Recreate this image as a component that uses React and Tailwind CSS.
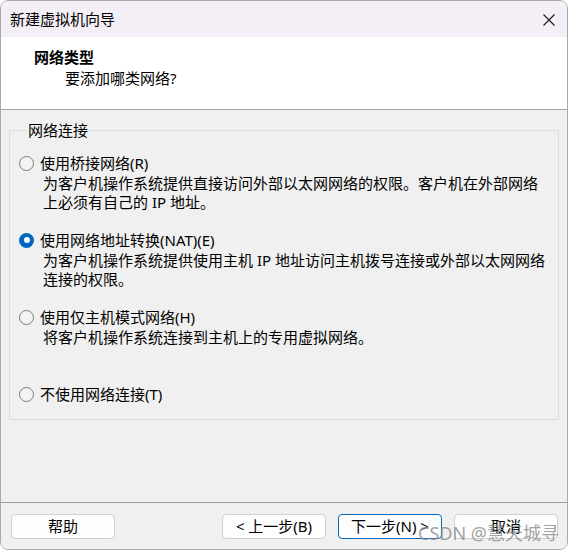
import React from "react";

const font = { fontFamily: '"Noto Sans", "Noto Sans CJK SC", sans-serif' };

function Radio({ checked }) {
  if (checked) {
    return (
      <span className="flex h-[15px] w-[15px] shrink-0 items-center justify-center rounded-full bg-[#0067c0]">
        <span className="h-[6px] w-[6px] rounded-full bg-white" />
      </span>
    );
  }
  return <span className="h-[15px] w-[15px] shrink-0 rounded-full border border-[#7c7c7c] bg-[#f3f3f3]" />;
}

function Option({ checked, label, desc }) {
  return (
    <div className="flex flex-col">
      <div className="flex h-[20px] items-center gap-[6px]">
        <Radio checked={checked} />
        <span className="leading-[20px]">{label}</span>
      </div>
      {desc !== undefined && (
        <div className="mt-[1px] h-[38px] pl-[24px] leading-[19px]">{desc}</div>
      )}
    </div>
  );
}

function Btn({ children, primary }) {
  return (
    <button
      className={
        primary
          ? "flex h-[25px] w-[104px] items-center justify-center rounded-[4px] border border-[#0067c0] bg-[#fdfdfd] text-[15px] leading-none text-black"
          : "flex h-[25px] w-[104px] items-center justify-center rounded-[4px] border border-[#d0d0d0] bg-[#fdfdfd] text-[15px] leading-none text-black"
      }
    >
      {children}
    </button>
  );
}

export default function App() {
  return (
    <div className="h-[551px] w-[570px] bg-white text-[15px] text-black" style={font}>
      <div className="relative flex h-[550px] w-[568px] flex-col overflow-hidden rounded-[8px] border border-[#a9a9a9]">
        {/* title bar */}
        <div className="flex h-[36px] shrink-0 items-center justify-between bg-[#f4eef7] pl-[9px] pr-[12px]">
          <span className="leading-[20px]">新建虚拟机向导</span>
          <svg width="12" height="12" viewBox="0 0 12 12" className="mt-[2px]">
            <path d="M0.5 0.5 L11.5 11.5 M11.5 0.5 L0.5 11.5" stroke="#1a1a1a" strokeWidth="1.1" />
          </svg>
        </div>
        {/* header */}
        <div className="h-[73px] shrink-0 border-b border-[#a0a0a0] bg-white pl-[33px] pt-[10px]">
          <div className="font-bold leading-[20px]">网络类型</div>
          <div className="pl-[31px] leading-[22px]">要添加哪类网络?</div>
        </div>
        {/* body */}
        <div className="flex flex-1 flex-col bg-[#f0f0f0]">
          <div className="px-[8px] pt-[10px]">
            <fieldset className="border border-[#dcdcdc] pb-[15px] pl-[9px] pt-[13px]">
              <legend className="ml-[8px] px-[1px] leading-[20px]">网络连接</legend>
              <div className="flex flex-col gap-[18px]">
                <Option
                  label="使用桥接网络(R)"
                  desc={
                    <>
                      为客户机操作系统提供直接访问外部以太网网络的权限。客户机在外部网络
                      <br />
                      上必须有自己的 IP 地址。
                    </>
                  }
                />
                <Option
                  checked
                  label="使用网络地址转换(NAT)(E)"
                  desc={
                    <>
                      为客户机操作系统提供使用主机 IP 地址访问主机拨号连接或外部以太网网络
                      <br />
                      连接的权限。
                    </>
                  }
                />
                <Option label="使用仅主机模式网络(H)" desc="将客户机操作系统连接到主机上的专用虚拟网络。" />
                <Option label="不使用网络连接(T)" />
              </div>
            </fieldset>
          </div>
          <div className="flex-1" />
          <div className="flex h-[47px] shrink-0 items-start border-t border-[#a0a0a0] pl-[10px] pr-[9px] pt-[11px]">
            <Btn>帮助</Btn>
            <div className="flex-1" />
            <div className="flex gap-[12px]">
              <Btn>&lt; 上一步(B)</Btn>
              <Btn primary>下一步(N) &gt;</Btn>
              <Btn>取消</Btn>
            </div>
          </div>
        </div>
        {/* watermark */}
        <div className="pointer-events-none absolute left-[417px] top-[520px] text-[18px] leading-[24px] text-[#8a8a8a]/80">
          CSDN @慧天城寻
        </div>
      </div>
    </div>
  );
}
